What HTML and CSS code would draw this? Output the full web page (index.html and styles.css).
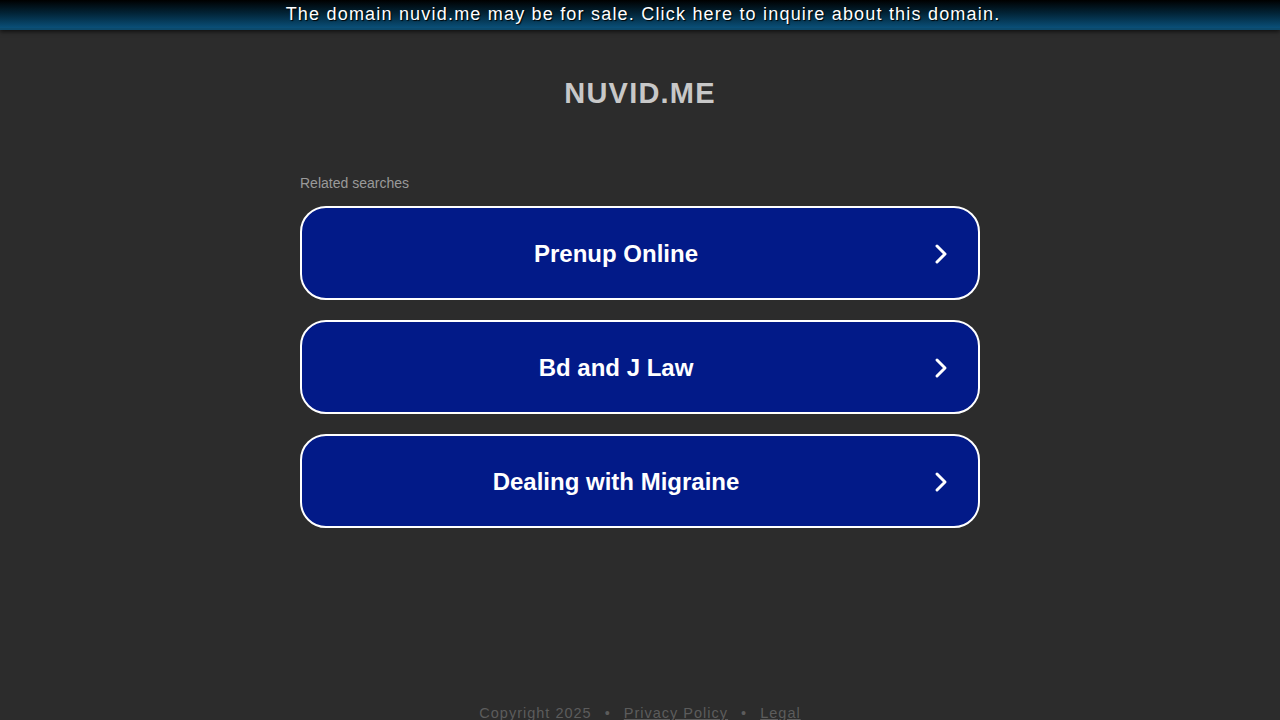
FILE: index.html
```html
<!DOCTYPE html>
<html>
<head>
<meta charset="utf-8">
<link rel="stylesheet" href="styles.css">
</head>
<body>
<div class="topbar">The domain nuvid.me may be for sale. Click here to inquire about this domain.</div>
<div class="main">
  <h1 class="title">NUVID.ME</h1>
  <div class="related">
    <div class="label">Related searches</div>
    <a class="btn"><span class="btn-text">Prenup Online</span><svg class="chev" viewBox="0 0 24 24" width="24" height="24"><path d="M8 4l8 8-8 8" fill="none" stroke="#fff" stroke-width="3" stroke-linecap="round" stroke-linejoin="round"/></svg></a>
    <a class="btn"><span class="btn-text">Bd and J Law</span><svg class="chev" viewBox="0 0 24 24" width="24" height="24"><path d="M8 4l8 8-8 8" fill="none" stroke="#fff" stroke-width="3" stroke-linecap="round" stroke-linejoin="round"/></svg></a>
    <a class="btn"><span class="btn-text">Dealing with Migraine</span><svg class="chev" viewBox="0 0 24 24" width="24" height="24"><path d="M8 4l8 8-8 8" fill="none" stroke="#fff" stroke-width="3" stroke-linecap="round" stroke-linejoin="round"/></svg></a>
  </div>
</div>
<div class="footer">Copyright 2025 <span class="dot">•</span> <a class="flink">Privacy Policy</a> <span class="dot">•</span> <a class="flink">Legal</a></div>
</body>
</html>
```
FILE: styles.css
```css
html, body {
  margin: 0;
  padding: 0;
  height: 100%;
}
body {
  background: #2c2c2c;
  font-family: "Liberation Sans", Arial, sans-serif;
  display: flex;
  flex-direction: column;
  overflow: hidden;
}
.topbar {
  height: 28px;
  line-height: 28px;
  padding-left: 6px;
  text-align: center;
  color: #fff;
  font-size: 18px;
  letter-spacing: 1.2px;
  background: linear-gradient(to bottom, #000 0%, #02263a 50%, #0a5079 100%);
  border-bottom: 2px solid #0c4a6c;
  box-shadow: 0 2px 4px rgba(0,0,0,0.6);
  text-shadow: 1px 1px 1px #000;
}
.main {
  flex: 1;
  display: flex;
  flex-direction: column;
  align-items: center;
}
.title {
  margin: 45px 0 0 0;
  height: 36px;
  line-height: 36px;
  font-size: 29px;
  font-weight: bold;
  letter-spacing: 1.2px;
  color: #c8c8c8;
}
.related {
  width: 680px;
  margin-top: 64px;
  display: flex;
  flex-direction: column;
  gap: 20px;
}
.label {
  font-size: 14px;
  color: #9a9a9a;
  height: 16px;
  line-height: 16px;
  margin-bottom: -5px;
}
.btn {
  box-sizing: border-box;
  height: 94px;
  border: 2px solid #fff;
  border-radius: 26px;
  background: #021a88;
  display: flex;
  align-items: center;
  padding: 2px 25px 0 0;
  color: #fff;
}
.btn-text {
  flex: 1;
  text-align: center;
  font-size: 24px;
  font-weight: bold;
  padding-left: 1px;
}
.chev {
  width: 24px;
  height: 24px;
}
.footer {
  height: 20px;
  text-align: center;
  font-size: 14.5px;
  letter-spacing: 1px;
  color: #5c5c5c;
  line-height: 26px;
}
.dot {
  margin: 0 8px;
}
.flink {
  color: #5c5c5c;
  text-decoration: underline;
}
```
